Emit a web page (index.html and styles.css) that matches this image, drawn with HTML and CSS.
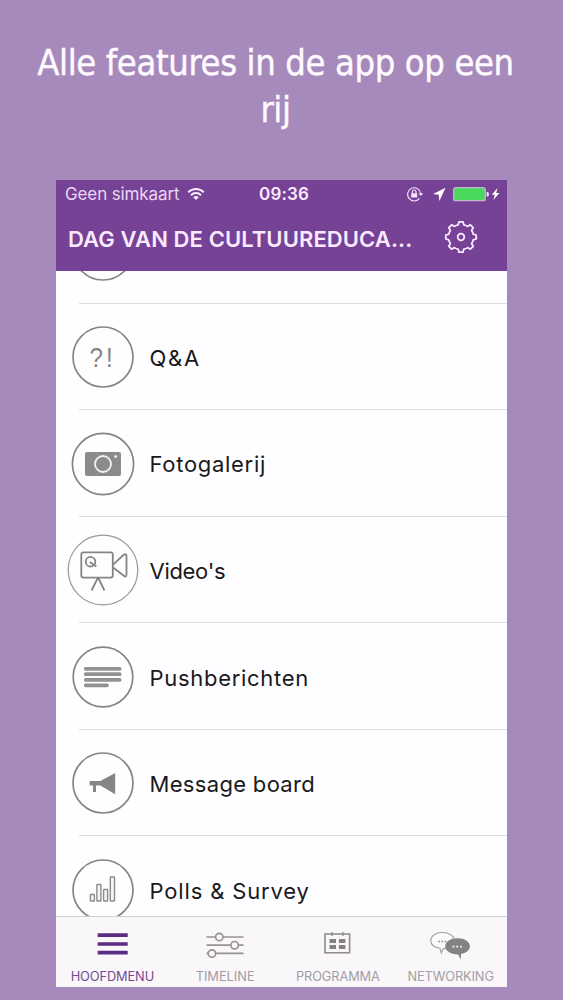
FILE: index.html
```html
<!DOCTYPE html>
<html lang="nl">
<head>
<meta charset="utf-8">
<title>Dag van de Cultuureducatie</title>
<link rel="stylesheet" href="styles.css">
</head>
<body>
<h1 class="headline">Alle features in de app op een<br>rij</h1>
<main class="phone">
  <header class="top">
    <div class="status">
      <span class="carrier">Geen simkaart</span>
      <svg class="wifi" width="18" height="14" viewBox="0 0 18 14" fill="none" stroke="#fbeaff" stroke-width="2"><path d="M1.2 5.2a11 11 0 0 1 15.6 0M4 8.2a7 7 0 0 1 10 0"/><path d="M9 13 6.2 10.3a4 4 0 0 1 5.6 0z" fill="#fbeaff" stroke="none"/></svg>
      <span class="clock">09:36</span>
      <svg class="indicators" width="94" height="18" viewBox="0 0 94 18">
        <g fill="none" stroke="#f6e2fb" stroke-width="1.2"><path d="M12.500 13.400A6.6 6.6 0 1 1 13.800 8.500"/><path d="M5.4 8.5V6.8a1.8 1.8 0 0 1 3.6 0v1.7"/></g>
        <path d="M4.2 8.2h6v4.3h-6zM11.6 8.3h4.6l-2.3 2.8z" fill="#f6e2fb"/>
        <path d="M38.500 2.8 26 9l5.7.7.7 6.3z" fill="#fff"/>
        <rect x="46.7" y="2.7" width="31.6" height="13" rx="2" fill="#49d95c" stroke="#c3b5cf" stroke-width="1.3"/>
        <path d="M79.6 7h1q1.3 0 1.3 2.2t-1.3 2.2h-1z" fill="#f6e2fb"/>
        <path d="m90.5 3-5.7 6.8h3L86.4 15l6-7h-3.2z" fill="#fff"/>
      </svg>
    </div>
    <div class="titlebar">
      <span class="title">DAG VAN DE CULTUUREDUCA...</span>
      <svg class="gear" width="34" height="34" viewBox="-17 -17 34 34" fill="none" stroke="#fbeaff" stroke-width="1.8" stroke-linejoin="round"><path d="M-2-15.2H2L2.800-12.200Q5-11.800 6.600-10.600L9.300-12.200 12.200-9.300 10.600-6.600Q11.800-5 12.200-2.800L15.200-2V2L12.200 2.800Q11.800 5 10.600 6.600L12.200 9.300 9.300 12.200 6.600 10.600Q5 11.800 2.800 12.200L2 15.200H-2L-2.800 12.200Q-5 11.800-6.600 10.600L-9.300 12.200-12.200 9.300-10.600 6.600Q-11.800 5-12.200 2.800L-15.200 2V-2L-12.200-2.800Q-11.800-5-10.600-6.600L-12.200-9.300-9.300-12.200-6.600-10.600Q-5-11.800-2.800-12.200Z"/><circle r="3.3"/></svg>
    </div>
  </header>
  <div class="viewport">
    <ul class="list">
      <li class="row"><svg class="icon" viewBox="-36 -36 72 72"><circle class="ring" r="30"/></svg></li>
      <li class="row"><svg class="icon" viewBox="-36 -36 72 72"><circle class="ring" r="30"/><g transform="scale(.93 1.080)"><text class="glyph" y="9"><tspan x="-14.500">?</tspan><tspan x="3.200">!</tspan></text></g></svg><span class="label qa">Q&amp;A</span></li>
      <li class="row"><svg class="icon" viewBox="-36 -36 72 72"><circle class="ring" r="30.6"/><rect x="-18" y="-12" width="36" height="24" rx="2" fill="#8b8b8d"/><circle cx="0" cy="0" r="8" fill="none" stroke="#f1f1f3" stroke-width="1.8"/><circle cx="12.6" cy="-7.6" r="1.5" fill="#eee"/></svg><span class="label foto">Fotogalerij</span></li>
      <li class="row"><svg class="icon" viewBox="-36 -36 72 72"><circle class="ring thin" r="34.8"/><g fill="none" stroke="#858587" stroke-width="1.8" stroke-linejoin="round"><rect x="-21.7" y="-17.6" width="31.5" height="25.2" rx="2.3"/><path d="M10.1-5.4 20.5-15Q23.500-17 23.500-13.5V4.5Q23.500 8 20.500 5.5L10.1-2.5M-5.2 8-11.5 20.5M-4.6 8 1.4 20.5"/></g><g fill="none" stroke="#858587" stroke-width="1.8"><circle cx="-12.500" cy="-8.3" r="4.8"/><path d="m-13.2-8.1 6.5 4.700"/></g></svg><span class="label video">Video's</span></li>
      <li class="row"><svg class="icon" viewBox="-36 -36 72 72"><circle class="ring" r="29.8"/><path d="M-17.3-8.2h34M-17.3-2.8h34M-17.3 2.8h34M-17.3 8.3H4" stroke="#929294" stroke-width="3.7" stroke-linecap="round"/></svg><span class="label push">Pushberichten</span></li>
      <li class="row"><svg class="icon" viewBox="-36 -36 72 72"><circle class="ring" r="30"/><path d="M-13.3-2h10.6L12.2-10V11.2L-2.7 2.6H-7V9h-3V2.6h-3.3z" fill="#858587"/></svg><span class="label message">Message board</span></li>
      <li class="row"><svg class="icon" viewBox="-36 -36 72 72"><circle class="ring" r="30"/><g fill="#f6f6f7" stroke="#8b8b8d" stroke-width="1.4"><rect x="-12.6" y="4.5" width="4" height="6.5" rx=".5"/><rect x="-6.1" y="-5.5" width="4" height="16.5" rx=".5"/><rect x=".6" y="-.5" width="4" height="11.5" rx=".5"/><rect x="7.3" y="-13" width="4.2" height="24" rx=".5"/></g></svg><span class="label polls">Polls &amp; Survey</span></li>
    </ul>
  </div>
  <nav class="tabs">
    <div class="tab active"><svg class="tabicon" width="44" height="32" viewBox="0 0 44 32"><path d="M7.700 6.2h30M7.700 15h30M7.700 23.7h30" stroke="#5b2c83" stroke-width="3.7"/></svg><span class="t1">HOOFDMENU</span></div>
    <div class="tab"><svg class="tabicon" width="44" height="32" viewBox="0 0 44 32" fill="#faf7fa" stroke="#969397" stroke-width="1.7"><path d="M3.5 8h37M3.5 16.2h37M3.5 24.3h37"/><circle cx="16.3" cy="8" r="3.7"/><circle cx="31.6" cy="16.2" r="3.7"/><circle cx="8.9" cy="24.5" r="3.7"/></svg><span class="t2">TIMELINE</span></div>
    <div class="tab"><svg class="tabicon" width="44" height="32" viewBox="0 0 44 32"><path d="M9 5h24.6v18.7H9z" fill="none" stroke="#8d8a8e" stroke-width="1.6"/><path d="M15.9 3v4M26.9 3v4" stroke="#8d8a8e" stroke-width="1.3"/><path d="M13.5 10h6.5v4h-6.5zM22.9 10h6.5v4h-6.5zM13.5 16h6.5v4h-6.5zM22.9 16h6.5v4h-6.5z" fill="#858286"/></svg><span class="t3">PROGRAMMA</span></div>
    <div class="tab"><svg class="tabicon" width="44" height="32" viewBox="0 0 44 32"><g transform="translate(-1.200)"><path d="M14.5 3.5c7 0 12 3.6 12 8.3s-5 7.8-11 7.8L13.5 24l-1.4-4.7C6.800 18.600 3 15.800 3 11.800c0-4.700 4.500-8.300 11.500-8.300z" fill="#fcfafc" stroke="#a09da1" stroke-width="1.1"/><path d="M10.400 12.500h8" stroke="#8b888c" stroke-width="1.700" stroke-dasharray="1.700 1.500"/><path d="M29.700 9.200c7 0 12.400 3.500 12.400 8 0 3.800-3.700 6.700-8.900 7.800L33 30.500 30.300 25.400c-7 .2-12.900-3.500-12.900-8.200 0-4.500 5.300-8 12.300-8z" fill="#858286"/><path d="M24.700 17.600h10.500" stroke="#f6f2f6" stroke-width="1.900" stroke-dasharray="1.900 1.900"/></g></svg><span class="t4">NETWORKING</span></div>
  </nav>
</main>
</body>
</html>
```
FILE: styles.css
```css
* { box-sizing: border-box; }
body {
  margin: 0;
  height: 1000px;
  overflow: hidden;
  background: #a68abb;
  font-family: Inter, "Liberation Sans", sans-serif;
}
.headline {
  margin: 0;
  height: 179.500px;
  padding: 39px 12px 0 0;
  text-align: center;
  white-space: nowrap;
  font: 36px/47px "DejaVu Sans Condensed", "DejaVu Sans", sans-serif;
  font-stretch: condensed;
  color: #fffaff;
  letter-spacing: -.36px;
  -webkit-text-stroke: .4px #fffaff;
}
.phone {
  width: 451px;
  height: 807.500px;
  margin-left: 56px;
  display: flex;
  flex-direction: column;
  background: #fefdff;
}
.top {
  height: 91px;
  flex: none;
  background: #754296;
  color: #fbeaff;
}
.status {
  height: 29px;
  padding: 0 6px 0 9px;
  display: flex;
  align-items: center;
  font-size: 17px;
}
.carrier { width: 122px; white-space: nowrap; color: #ecd5f5; letter-spacing: -.12px; }
.clock { margin-left: 54px; font-weight: 600; letter-spacing: .2px; }
.indicators { margin-left: auto; }
.titlebar {
  display: flex;
  align-items: center;
  justify-content: space-between;
  padding: 0 29px 0 12px;
  height: 57px;
}
.title { font-size: 22px; font-weight: 600; white-space: nowrap; letter-spacing: .1px; padding-top: 4px; }
.viewport {
  height: 645.500px;
  overflow: hidden;
  flex: none;
}
.list { list-style: none; margin: -73.600px 0 0; padding: 0; }
.row {
  height: 106.600px;
  margin-left: 23px;
  border-bottom: 1px solid #dcdbde;
  display: flex;
  align-items: center;
}
.icon { width: 72px; height: 72px; margin: 1.500px 0 0 -12.500px; flex: none; }
.ring { fill: #fefefe; stroke: #858587; stroke-width: 1.700px; }
.thin { stroke: #98989a; stroke-width: 1.200px; }
.glyph { font: 26px "Liberation Sans", sans-serif; fill: #858587; }
.label {
  margin-left: 11px;
  color: #19191b;
  font-size: 22px;
  white-space: nowrap;
  padding-top: 3px;
  letter-spacing: .5px;
}
.qa { letter-spacing: 1.800px; }
.foto { letter-spacing: .700px; }
.video { letter-spacing: -.300px; }
.push { letter-spacing: .700px; }
.message { letter-spacing: .320px; }
.polls { letter-spacing: .850px; }
.tabs {
  flex: 1;
  display: grid;
  grid-template-columns: repeat(4, 1fr);
  border-top: 1px solid #d2cfd3;
  background: #faf7fa;
}
.tab {
  display: flex;
  flex-direction: column;
  align-items: center;
  padding-top: 12px;
  color: #a19da3;
  font-size: 12.800px;
  line-height: 16px;
}
.tabicon { flex: none; margin-bottom: 8px; }
.active { color: #734b91; }
.t1, .t3, .t4 { letter-spacing: -.1px; }
```
